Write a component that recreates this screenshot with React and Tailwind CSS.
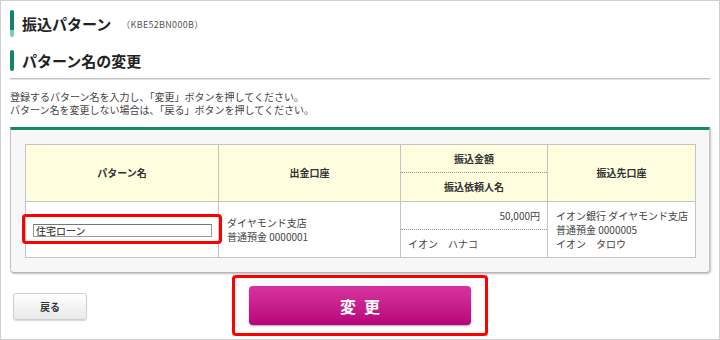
export default function App() {
  const font = { fontFamily: '"Noto Sans CJK JP", "Noto Sans", sans-serif' };

  return (
    <div
      className="w-[720px] h-[340px] border border-[#cfcfcf] bg-white px-[9px] text-[#333]"
      style={font}
    >
      {/* Page title */}
      <div className="mt-[9px] h-[27px] flex items-center">
        <div className="w-[4px] h-[27px] flex flex-col rounded-[2px] overflow-hidden">
          <div className="h-[20px] bg-[#128566]" />
          <div className="h-[7px] bg-[#7dcbb2]" />
        </div>
        <h1 className="ml-[8px] text-[15px] font-bold leading-none text-[#222]">振込パターン</h1>
        <span className="ml-[10px] mt-[2px] text-[9px] tracking-[0.3px] text-[#555]">（KBE52BN000B）</span>
      </div>

      {/* Section title */}
      <div className="mt-[13px] h-[21px] flex items-center">
        <div className="w-[4px] h-[21px] rounded-[2px] bg-[#128566]" />
        <h2 className="ml-[8px] text-[15px] font-bold leading-none text-[#222]">パターン名の変更</h2>
      </div>

      <div className="mt-[7px] border-t border-[#c2c2c2] border-b border-b-[#e2e2e2]" />

      <div className="mt-[10px] flex flex-col text-[10px] leading-[13px] text-[#444]">
        <p>登録するパターン名を入力し、「変更」ボタンを押してください。</p>
        <p>パターン名を変更しない場合は、「戻る」ボタンを押してください。</p>
      </div>

      {/* Panel */}
      <div className="mt-[11px] border-t-[3px] border-t-[#18876b] border-x border-b border-x-[#c4c4c4] border-b-[#b4b4b4] rounded-b-[4px] bg-[#f7f7f7] px-[14px] pt-[14px] pb-[14px] shadow-[1px_1px_2px_rgba(0,0,0,0.25)]">
        <table className="w-[670px] table-fixed border-collapse text-[10px] leading-[14px]">
          <colgroup>
            <col className="w-[193px]" />
            <col className="w-[182px]" />
            <col className="w-[147px]" />
            <col className="w-[148px]" />
          </colgroup>
          <thead>
            <tr className="h-[28px]">
              <th rowSpan={2} className="border border-[#c4c4c4] bg-[#ffffe0] font-bold text-[#333]">パターン名</th>
              <th rowSpan={2} className="border border-[#c4c4c4] bg-[#ffffe0] font-bold text-[#333]">出金口座</th>
              <th className="border-x border-t border-[#c4c4c4] border-b-0 bg-[#ffffe0] font-bold text-[#333]">振込金額</th>
              <th rowSpan={2} className="border border-[#c4c4c4] bg-[#ffffe0] font-bold text-[#333]">振込先口座</th>
            </tr>
            <tr className="h-[29px]">
              <th className="border border-[#c4c4c4] border-t-[#999] bg-[#ffffe0] font-bold text-[#333]" style={{ borderStyle: 'dotted solid solid solid' }}>振込依頼人名</th>
            </tr>
          </thead>
          <tbody>
            <tr className="h-[28px]">
              <td rowSpan={2} className="border border-[#c4c4c4] bg-white pl-[7px]">
                <span className="relative inline-block align-middle">
                  <input
                    defaultValue="住宅ローン"
                    className="block w-[179px] h-[13px] border border-[#9a9a9a] border-t-[#777] bg-white px-[2px] text-[10px] leading-[11px] text-[#222] outline-none"
                    style={font}
                  />
                  <span className="absolute -left-[11px] -right-[10px] -top-[10px] -bottom-[7px] border-[3px] border-[#ff0000] rounded-[4px]" />
                </span>
              </td>
              <td rowSpan={2} className="border border-[#c4c4c4] bg-white pl-[8px] text-[#444]">
                ダイヤモンド支店
                <br />
                普通預金 0000001
              </td>
              <td className="border-x border-t border-[#c4c4c4] border-b-0 bg-white pr-[7px] align-top pt-[7px] text-right text-[#444]">
                50,000円
              </td>
              <td rowSpan={2} className="border border-[#c4c4c4] bg-white pl-[8px] text-[#444]">
                イオン銀行 ダイヤモンド支店
                <br />
                普通預金 0000005
                <br />
                イオン　タロウ
              </td>
            </tr>
            <tr className="h-[28px]">
              <td className="border border-[#c4c4c4] border-t-[#999] bg-white pl-[7px] align-bottom pb-[6px] text-[#444]" style={{ borderStyle: 'dotted solid solid solid' }}>
                イオン　ハナコ
              </td>
            </tr>
          </tbody>
        </table>
      </div>

      {/* Buttons */}
      <div className="mt-[13px] grid grid-cols-[1fr_auto_1fr] items-center">
        <div>
          <button className="ml-[3px] mt-[1px] w-[74px] h-[27px] rounded-[3px] border border-[#cfcfcf] bg-gradient-to-b from-white to-[#e9e9e9] text-[10px] font-bold text-[#333] shadow-[0_1px_1px_rgba(0,0,0,0.15)]">
            戻る
          </button>
        </div>
        <div className="relative">
          <button className="w-[222px] h-[39px] rounded-[4px] bg-gradient-to-b from-[#d6329f] to-[#b8007a] pl-[8px] text-[16px] font-bold tracking-[8px] text-white shadow-[0_1px_2px_rgba(0,0,0,0.35)]">
            変更
          </button>
          <span className="absolute -left-[17px] -right-[17px] -top-[11px] -bottom-[11px] border-[3px] border-[#ff0000] rounded-[4px]" />
        </div>
        <div />
      </div>
    </div>
  );
}
